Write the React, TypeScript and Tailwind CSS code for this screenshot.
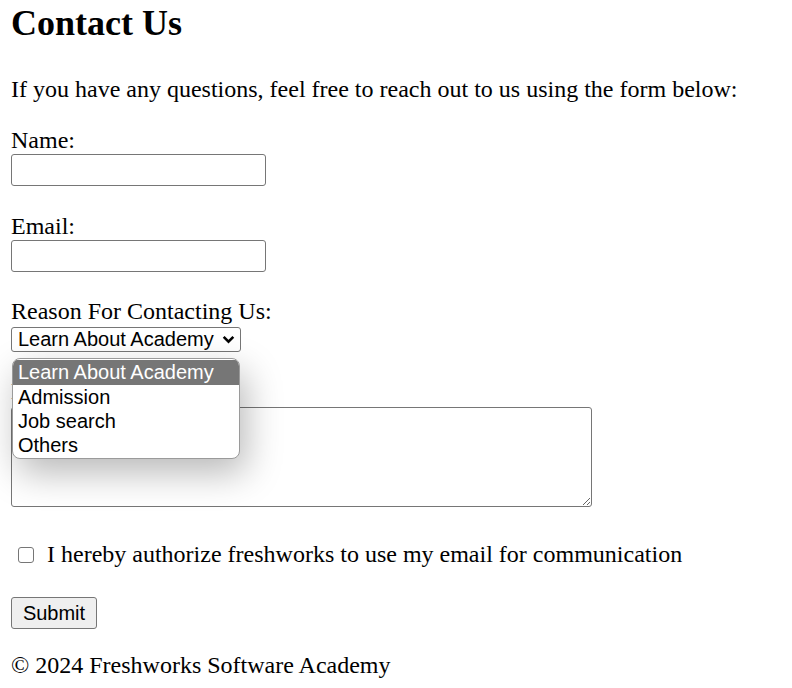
function ContactForm() {
    return (
        <form className="flex flex-col items-start">
            <label className="mt-[24px] leading-[27px]">Name:</label>
            <input type="text" className="w-[255px] h-[32px] border border-[#767676] rounded-[3px] bg-white" />

            <label className="mt-[27px] leading-[27px]">Email:</label>
            <input type="email" className="w-[255px] h-[32px] border border-[#767676] rounded-[3px] bg-white" />

            <label className="mt-[26px] leading-[27px]">Reason For Contacting Us:</label>
            <div className="relative mt-[2px]">
                {/* select cerrado */}
                <div className="flex items-center w-[230px] h-[25px] border border-[#767676] rounded-[3px] bg-white pl-[6px] pr-[4px] font-['Liberation_Sans',Arial,sans-serif] text-[20px] leading-[23px]">
                    <span className="flex-1">Learn About Academy</span>
                    <svg width="15" height="15" viewBox="0 0 14 14" fill="none" stroke="black" strokeWidth="2.4">
                        <path d="M2.5 4.5 L7 9 L11.5 4.5" />
                    </svg>
                </div>
                {/* lista desplegada */}
                <div className="absolute left-[1px] top-[31px] z-10 w-[228px] bg-white border border-[#9a9a9a] rounded-[8px] overflow-hidden shadow-[6px_14px_36px_rgba(0,0,0,0.28)] font-['Liberation_Sans',Arial,sans-serif] text-[20px] leading-[24px] pt-[1px] pb-[1px]">
                    <div className="bg-[#767676] text-white pl-[5px] h-[25px]">Learn About Academy</div>
                    <div className="pl-[5px]">Admission</div>
                    <div className="pl-[5px]">Job search</div>
                    <div className="pl-[5px]">Others</div>
                </div>
            </div>

            <label className="mt-[26px] leading-[27px]">Message:</label>
            <textarea className="mt-[2px] w-[581px] h-[100px] border border-[#767676] rounded-[3px] bg-white resize" />

            <div className="flex items-center mt-[34px] leading-[27px]">
                <input type="checkbox" className="appearance-none w-4 h-4 ml-[7px] mr-[13px] border-[1.5px] border-[#767676] rounded-[3px] bg-white" />
                <span>I hereby authorize freshworks to use my email for communication</span>
            </div>

            <button type="button" className="mt-[29px] w-[86px] h-[32px] bg-[#efefef] border border-[#767676] rounded-[3px] font-['Liberation_Sans',Arial,sans-serif] text-[20px]">
                Submit
            </button>
        </form>
    );
}

function App() {
    return (
        <div className="bg-white min-h-screen px-[11px] text-black font-['Liberation_Serif','Times_New_Roman',serif] text-[24px]">
            <h1 className="pt-[3px] text-[36px] font-bold leading-[41px]">Contact Us</h1>
            <p className="mt-[32px] leading-[27px]">If you have any questions, feel free to reach out to us using the form below:</p>
            <ContactForm />
            <p className="mt-[23px] leading-[27px]">© 2024 Freshworks Software Academy</p>
        </div>
    );
}

export default App;
